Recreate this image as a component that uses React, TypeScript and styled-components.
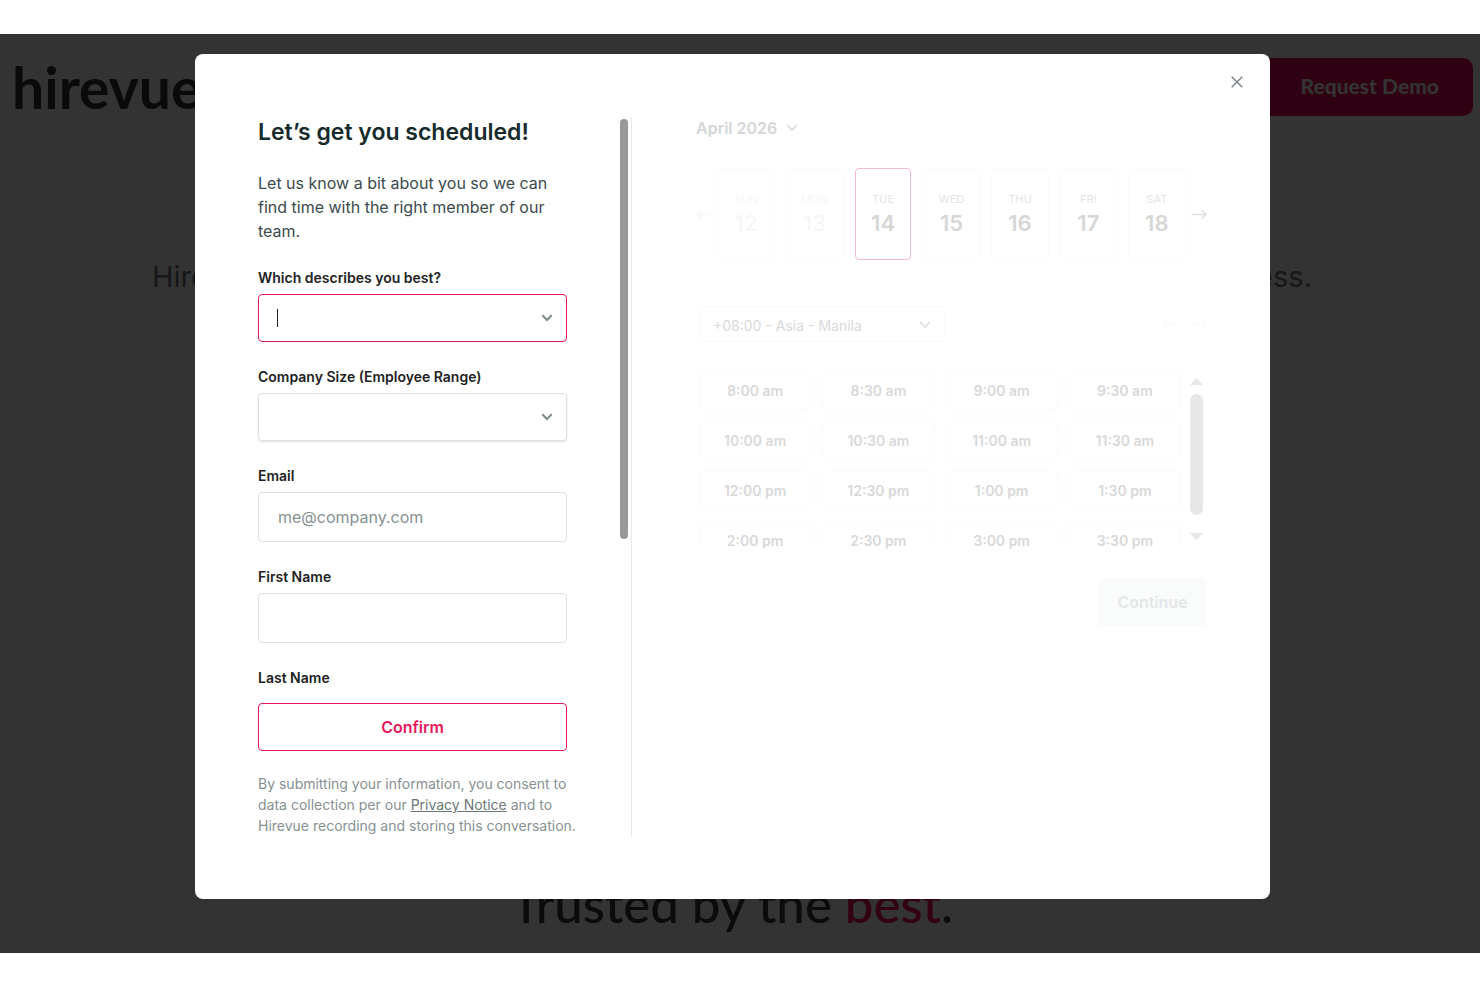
import React from "react";
import styled, { createGlobalStyle, css } from "styled-components";

const PINK = "#e8175d";

const GlobalStyle = createGlobalStyle`
  *, *::before, *::after { box-sizing: border-box; }
  body { margin: 0; background: #fff; font-family: Inter, "Liberation Sans", sans-serif; color: #172b2d; }
  button, input, select { font: inherit; color: inherit; margin: 0; }
  h1, h2, p { margin: 0; }
`;

const Stage = styled.div`
  display: grid;
  margin: 34px 0;
  background: #333;
  overflow: hidden;
`;

const Site = styled.div`
  grid-area: 1 / 1;
  padding: 24px 7px 16px 12px;
  color: #0a0b0d;
`;

const SiteHeader = styled.header`
  display: flex;
  justify-content: space-between;
  align-items: center;
`;

const Logo = styled.a`
  font: 700 57px/58px Lato, sans-serif;
  color: #0a0a0c;
  text-decoration: none;
`;

const DemoButton = styled.button`
  width: 220px;
  height: 58px;
  padding: 0 34px 2px;
  border: 0;
  border-radius: 10px;
  background: #2f0011;
  color: #333;
  font: 900 21px/24px Lato, sans-serif;
  text-align: right;
  white-space: nowrap;
`;

const Hero = styled.div`
  display: flex;
  flex-direction: column;
  align-items: center;
  padding-right: 21px;
`;

const Lead = styled.p`
  display: flex;
  justify-content: space-between;
  width: 100%;
  max-width: 1160px;
  margin: 141px 0 577px;
  font-size: 29px;
  font-weight: 400;
  line-height: 40px;
  color: #15171a;
`;

const Trusted = styled.h2`
  font: 500 51px/60px Lato, sans-serif;

  em {
    font-style: normal;
    color: #33000f;
  }
`;

const Overlay = styled.div`
  grid-area: 1 / 1;
  z-index: 1;
  display: flex;
  justify-content: center;
  align-items: flex-start;
  padding: 20px 15px 54px 0;
`;

const Dialog = styled.div`
  position: relative;
  display: flex;
  width: 100%;
  max-width: 1075px;
  padding: 63px;
  border-radius: 8px;
  background: #fff;
`;

const CloseButton = styled.button`
  position: absolute;
  top: 16px;
  right: 21px;
  display: grid;
  place-items: center;
  width: 24px;
  height: 24px;
  padding: 0;
  border: 0;
  background: none;
  color: #7b8788;
`;

const FormPane = styled.form`
  display: flex;
  flex: 0 0 374px;
  flex-direction: column;
  padding-right: 3px;
  border-right: 1px solid #e4e8ea;
`;

const ScrollArea = styled.div`
  display: flex;
  justify-content: space-between;
`;

const Fields = styled.div`
  width: 309px;
`;

const ScrollThumb = styled.div`
  width: 8px;
  height: 420px;
  margin-top: 2px;
  border-radius: 4px;
  background: #999;
`;

const Title = styled.h1`
  font-size: 23px;
  font-weight: 600;
  line-height: 30px;
`;

const Intro = styled.p`
  margin-top: 24px;
  color: #3c4b4d;
  font-size: 16px;
  line-height: 24px;
`;

const Label = styled.label`
  display: block;
  margin-top: 25px;
  color: #222;
  font-size: 14px;
  font-weight: 600;
  line-height: 20px;
`;

const Control = styled.div<{ $active?: boolean; $raised?: boolean }>`
  display: flex;
  align-items: center;
  height: 48px;
  margin-top: 6px;
  padding: 0 13px 0 18px;
  border: 1px solid ${(p) => (p.$active ? PINK : "#dce1e5")};
  border-radius: 4px;
  color: #7d898b;
  ${(p) =>
    p.$raised &&
    css`
      box-shadow: 0 1px 2px rgba(0, 0, 0, 0.12);
    `}
`;

const Caret = styled.span`
  width: 1px;
  height: 18px;
  background: #222;
`;

const Select = styled.select`
  flex: 1;
  min-width: 0;
  height: 100%;
  padding: 0;
  border: 0;
  outline: 0;
  appearance: none;
  background: none;
`;

const TextInput = styled.input`
  width: 100%;
  height: 50px;
  margin-top: 6px;
  padding: 0 19px;
  border: 1px solid #dce1e5;
  border-radius: 4px;
  font-size: 16px;

  &::placeholder {
    color: #869192;
    opacity: 1;
  }
`;

const ConfirmButton = styled.button`
  width: 309px;
  height: 48px;
  margin-top: 15px;
  border: 1px solid ${PINK};
  border-radius: 4px;
  background: #fff;
  color: ${PINK};
  font-size: 16px;
  font-weight: 600;
`;

const Consent = styled.p`
  margin-top: 22px;
  color: #869192;
  font-size: 14px;
  line-height: 21px;
  white-space: nowrap;

  a {
    color: #6b7778;
  }
`;

const SchedulePane = styled.section`
  flex: 1;
  min-width: 0;
  padding-left: 64px;
`;

const MonthButton = styled.button`
  display: flex;
  align-items: center;
  gap: 9px;
  height: 22px;
  padding: 0;
  border: 0;
  background: none;
  color: #d3d7d7;
  font-size: 16px;
  font-weight: 600;
`;

const DayRow = styled.div`
  display: flex;
  align-items: center;
  gap: 6px;
  margin-top: 29px;
`;

const Days = styled.div`
  display: grid;
  grid-template-columns: repeat(7, 1fr);
  flex: 1;
  gap: 10px;
`;

const ArrowButton = styled.button<{ $tone?: string }>`
  display: grid;
  place-items: center;
  width: 15px;
  height: 15px;
  padding: 0;
  border: 0;
  background: none;
  color: ${(p) => p.$tone || "#dde1e1"};
`;

const Day = styled.button<{ $state?: "past" | "selected" }>`
  display: flex;
  flex-direction: column;
  align-items: center;
  height: 92px;
  padding: 22px 0 0;
  border: 1px solid #fafbfb;
  border-radius: 6px;
  background: #fff;
  color: ${(p) => (p.$state === "past" ? "#f4f5f5" : "#d6d7d7")};
  font-size: 22px;
  font-weight: 600;
  line-height: 32px;

  small {
    color: ${(p) => (p.$state === "past" ? "#f6f7f7" : "#e4e5e5")};
    font-size: 11px;
    font-weight: 400;
    line-height: 16px;
  }

  ${(p) =>
    p.$state === "past" &&
    css`
      font-weight: 400;
    `}

  ${(p) =>
    p.$state === "selected" &&
    css`
      margin: 0 1px;
      border-color: #f9b9ce;
      border-radius: 4px;
    `}
`;

const ZoneRow = styled.div`
  display: flex;
  align-items: center;
  justify-content: space-between;
  margin: 46px 0 28px;
  padding-left: 4px;
`;

const ZoneBox = styled.div`
  display: flex;
  align-items: center;
  width: 245px;
  height: 36px;
  padding: 2px 13px 0 12px;
  border: 1px solid #f8f9f9;
  border-radius: 4px;
  color: #d8dada;
  font-size: 14px;
`;

const ArrowPair = styled.div`
  display: flex;
  gap: 15px;
`;

const SlotArea = styled.div`
  display: flex;
  height: 180px;
  padding: 1px 4px 0 3px;
  overflow: hidden;
`;

const Slots = styled.div`
  display: grid;
  grid-template-columns: repeat(4, 1fr);
  grid-auto-rows: 39px;
  flex: 1;
  gap: 11px;
`;

const Slot = styled.button`
  padding: 0;
  border: 1px solid #fafbfb;
  border-radius: 6px;
  background: #fff;
  color: #d8d9d9;
  font-size: 14px;
  font-weight: 600;
`;

const SlotScroll = styled.div`
  display: flex;
  flex-direction: column;
  align-items: center;
  gap: 9px;
  width: 13px;
  margin-left: 9px;
  padding-top: 7px;
  color: #e7e7e7;
`;

const SlotThumb = styled.div`
  width: 13px;
  height: 121px;
  margin-bottom: 9px;
  border-radius: 7px;
  background: currentColor;
`;

const ContinueButton = styled.button`
  display: block;
  width: 109px;
  height: 48px;
  margin: 28px 0 0 auto;
  border: 0;
  border-radius: 4px;
  background: #fafcfc;
  color: #e4e7e7;
  font-size: 16px;
  font-weight: 600;
`;

const Chevron = ({ width = 2 }: { width?: number }) => (
  <svg width="12" height="8" viewBox="0 0 12 8" fill="none" stroke="currentColor" strokeWidth={width} aria-hidden="true">
    <path d="M1.3 1.3 6 6l4.700-4.700" />
  </svg>
);

const Arrow = ({ left }: { left?: boolean }) => (
  <svg width="15" height="11" viewBox="0 0 15 11" fill="none" stroke="currentColor" strokeWidth="1.600" strokeLinejoin="round" aria-hidden="true">
    <path d={left ? "M15 5.500H1M5.200 1.200 1 5.500l4.200 4.300" : "M0 5.500h14M9.800 1.200 14 5.500l-4.200 4.300"} />
  </svg>
);

const Triangle = ({ down }: { down?: boolean }) => (
  <svg width="13" height="7" viewBox="0 0 13 7" fill="currentColor" aria-hidden="true">
    <path d={down ? "M0 0h13L6.500 7z" : "M0 7h13L6.500 0z"} />
  </svg>
);

const days: { name: string; date: number; state?: "past" | "selected" }[] = [
  { name: "SUN", date: 12, state: "past" },
  { name: "MON", date: 13, state: "past" },
  { name: "TUE", date: 14, state: "selected" },
  { name: "WED", date: 15 },
  { name: "THU", date: 16 },
  { name: "FRI", date: 17 },
  { name: "SAT", date: 18 },
];

const slots = [
  "8:00 am", "8:30 am", "9:00 am", "9:30 am",
  "10:00 am", "10:30 am", "11:00 am", "11:30 am",
  "12:00 pm", "12:30 pm", "1:00 pm", "1:30 pm",
  "2:00 pm", "2:30 pm", "3:00 pm", "3:30 pm",
];

export default function App() {
  return (
    <>
      <GlobalStyle />
      <Stage>
        <Site>
          <SiteHeader>
            <Logo href="#">hirevue</Logo>
            <DemoButton type="button">Request Demo</DemoButton>
          </SiteHeader>
          <Hero>
            <Lead>
              <span>Hire</span>
              <span>ess.</span>
            </Lead>
            <Trusted>
              Trusted by the <em>best</em>.
            </Trusted>
          </Hero>
        </Site>

        <Overlay>
          <Dialog role="dialog" aria-labelledby="dialog-title">
            <CloseButton type="button" aria-label="Close">
              <svg width="12" height="12" viewBox="0 0 12 12" stroke="currentColor" strokeWidth="1.500" aria-hidden="true">
                <path d="M.7.7l10.600 10.600M11.300.7.7 11.300" />
              </svg>
            </CloseButton>

            <FormPane>
              <ScrollArea>
                <Fields>
                  <Title id="dialog-title">Let’s get you scheduled!</Title>
                  <Intro>
                    Let us know a bit about you so we can
                    <br />
                    find time with the right member of our
                    <br />
                    team.
                  </Intro>
                  <Label htmlFor="role">Which describes you best?</Label>
                  <Control $active>
                    <Caret />
                    <Select id="role" defaultValue="">
                      <option value="" />
                    </Select>
                    <Chevron />
                  </Control>
                  <Label htmlFor="size">Company Size (Employee Range)</Label>
                  <Control $raised>
                    <Select id="size" defaultValue="">
                      <option value="" />
                    </Select>
                    <Chevron />
                  </Control>
                  <Label htmlFor="email">Email</Label>
                  <TextInput id="email" type="email" placeholder="me@company.com" />
                  <Label htmlFor="first">First Name</Label>
                  <TextInput id="first" type="text" />
                  <Label as="div">Last Name</Label>
                </Fields>
                <ScrollThumb />
              </ScrollArea>
              <ConfirmButton type="button">Confirm</ConfirmButton>
              <Consent>
                By submitting your information, you consent to
                <br />
                data collection per our <a href="#privacy">Privacy Notice</a> and to
                <br />
                Hirevue recording and storing this conversation.
              </Consent>
            </FormPane>

            <SchedulePane>
              <MonthButton type="button">
                April 2026
                <Chevron width={1.5} />
              </MonthButton>
              <DayRow>
                <ArrowButton type="button" aria-label="Previous week" $tone="#f5f7f7">
                  <Arrow left />
                </ArrowButton>
                <Days>
                  {days.map((d) => (
                    <Day key={d.date} type="button" $state={d.state}>
                      <small>{d.name}</small>
                      {d.date}
                    </Day>
                  ))}
                </Days>
                <ArrowButton type="button" aria-label="Next week">
                  <Arrow />
                </ArrowButton>
              </DayRow>
              <ZoneRow>
                <ZoneBox>
                  <Select aria-label="Time zone" defaultValue="manila">
                    <option value="manila">+08:00 - Asia - Manila</option>
                  </Select>
                  <Chevron width={1.5} />
                </ZoneBox>
                <ArrowPair>
                  <ArrowButton type="button" aria-label="Earlier times" $tone="#f9fafa">
                    <Arrow left />
                  </ArrowButton>
                  <ArrowButton type="button" aria-label="Later times" $tone="#f9fafa">
                    <Arrow />
                  </ArrowButton>
                </ArrowPair>
              </ZoneRow>
              <SlotArea>
                <Slots>
                  {slots.map((s) => (
                    <Slot key={s} type="button">
                      {s}
                    </Slot>
                  ))}
                </Slots>
                <SlotScroll>
                  <Triangle />
                  <SlotThumb />
                  <Triangle down />
                </SlotScroll>
              </SlotArea>
              <ContinueButton type="button">Continue</ContinueButton>
            </SchedulePane>
          </Dialog>
        </Overlay>
      </Stage>
    </>
  );
}
